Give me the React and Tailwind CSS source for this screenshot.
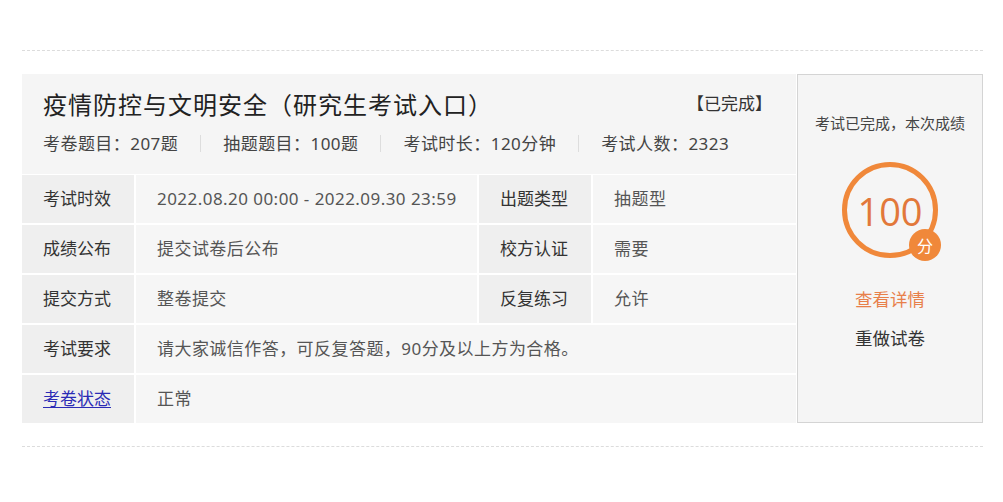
import React from 'react'

const font = { fontFamily: '"Noto Sans", "Noto Sans CJK SC", "Microsoft YaHei", sans-serif' }

const stats = ['考卷题目：207题', '抽题题目：100题', '考试时长：120分钟', '考试人数：2323']

function Label({ children, link }) {
  return (
    <div className="bg-[#efefef] flex items-center pl-[21px] text-[17px] text-[#333]">
      {link ? <span className="text-[#2b2bb5] underline underline-offset-2">{children}</span> : children}
    </div>
  )
}

function Value({ children, span }) {
  return (
    <div className={`bg-[#f6f6f6] flex items-center pl-[21px] text-[17px] tracking-[0.45px] text-[#555] ${span ? 'col-span-3' : ''}`}>
      {children}
    </div>
  )
}

export default function App() {
  return (
    <div className="bg-white min-h-screen" style={font}>
      <div className="ml-[22px] w-[961px] pt-[50px]">
        <div className="border-t border-dashed border-[#dcdcdc]" />

        <div className="mt-[23px] flex h-[349px]">
          {/* exam info */}
          <div className="w-[774px] bg-[#f5f5f5] flex flex-col">
            <div className="h-[100px] pl-[21px] pr-[24px] pt-[14px]">
              <div className="flex items-center justify-between">
                <h1 className="text-[24px] tracking-[1px] text-[#222] leading-[34px]">疫情防控与文明安全（研究生考试入口）</h1>
                <span className="text-[17px] text-[#333] mt-[-2px]">【已完成】</span>
              </div>
              <div className="flex items-center mt-[9px] text-[17px] tracking-[0.45px] text-[#444]">
                {stats.map((s, i) => (
                  <React.Fragment key={i}>
                    {i > 0 && <span className="mx-[22px] w-px h-[17px] bg-[#dddddd]" />}
                    <span>{s}</span>
                  </React.Fragment>
                ))}
              </div>
            </div>

            <div className="grid grid-cols-[112px_341px_112px_1fr] auto-rows-[48px] gap-[2px] bg-white flex-1 pt-[1px]">
              <Label>考试时效</Label>
              <Value>2022.08.20 00:00 - 2022.09.30 23:59</Value>
              <Label>出题类型</Label>
              <Value>抽题型</Value>

              <Label>成绩公布</Label>
              <Value>提交试卷后公布</Value>
              <Label>校方认证</Label>
              <Value>需要</Value>

              <Label>提交方式</Label>
              <Value>整卷提交</Value>
              <Label>反复练习</Label>
              <Value>允许</Value>

              <Label>考试要求</Label>
              <Value span>请大家诚信作答，可反复答题，90分及以上方为合格。</Value>

              <Label link>考卷状态</Label>
              <Value span>正常</Value>
            </div>
          </div>

          {/* score panel */}
          <div className="ml-[1px] flex-1 bg-[#f5f5f5] border border-[#d4d4d4] flex flex-col items-center">
            <p className="mt-[37px] text-[15px] text-[#444]">考试已完成，本次成绩</p>
            <div className="relative mt-[27px] w-[96px] h-[96px] rounded-full border-[5px] border-[#f0883a] flex items-center justify-center">
              <span className="text-[38px] leading-none text-[#e2783a] mt-[2px]" style={{ fontFamily: '"Open Sans", "Noto Sans", sans-serif' }}>100</span>
              <span className="absolute right-[-8px] bottom-[-8px] w-[32px] h-[32px] rounded-full bg-[#f0883a] text-white text-[16px] flex items-center justify-center" style={{ fontFamily: '"Noto Sans CJK SC", sans-serif' }}>分</span>
            </div>
            <button className="mt-[28px] text-[17.5px] text-[#e8804a]">查看详情</button>
            <button className="mt-[13px] text-[17.5px] text-[#333]">重做试卷</button>
          </div>
        </div>

        <div className="mt-[23px] border-t border-dashed border-[#dcdcdc]" />
      </div>
    </div>
  )
}
